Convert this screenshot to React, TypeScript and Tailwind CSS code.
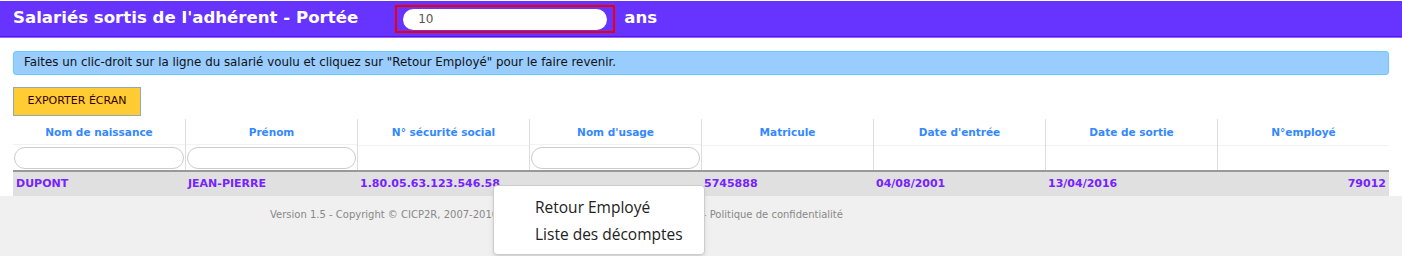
import React from "react";

const COLUMNS = [
  { label: "Nom de naissance", filter: true },
  { label: "Prénom", filter: true },
  { label: "N° sécurité social", filter: false },
  { label: "Nom d'usage", filter: true },
  { label: "Matricule", filter: false },
  { label: "Date d'entrée", filter: false },
  { label: "Date de sortie", filter: false },
  { label: "N°employé", filter: false },
];

const ROW = ["DUPONT", "JEAN-PIERRE", "1.80.05.63.123.546.58", "", "5745888", "04/08/2001", "13/04/2016", "79012"];

const App = () => {
  return (
    <div className="relative w-[1402px] h-[256px] bg-[#f0f0f0] overflow-hidden font-['DejaVu_Sans',sans-serif]">
      <div className="bg-white pt-px">
        <header className="h-[36px] bg-[#6633ff] border-b border-[#5511ee] flex items-center pl-[13px]">
          <h1 className="text-white font-bold text-[16.6px]">
            Salariés sortis de l&apos;adhérent - Portée
          </h1>
          <div className="ml-[37px] mt-px border-2 border-[#ee0000] w-[220px] h-[28px] flex items-center px-[6px]">
            <input
              defaultValue="10"
              className="w-full h-[21px] rounded-full bg-white pl-[15px] text-[12px] text-[#555] outline-none"
            />
          </div>
          <span className="ml-[9px] text-white font-bold text-[16.6px]">ans</span>
        </header>
        <div className="h-px bg-[#9966ff]" />

        <section className="px-[13px] pt-[13px]">
          <div className="w-[1376px] h-[24px] bg-[#99ccff] border border-[#66ccff] rounded-[3px] flex items-center pl-[10px] text-[11.85px] text-[#111]">
            Faites un clic-droit sur la ligne du salarié voulu et cliquez sur &quot;Retour Employé&quot; pour le faire revenir.
          </div>

          <button className="mt-[12px] w-[128px] h-[29px] bg-[#ffcc33] border border-[#8fa9b8] text-[11px] text-[#330000]">
            EXPORTER ÉCRAN
          </button>

          <div className="mt-[3px] w-[1376px]">
            <div className="grid grid-cols-8 border-b-2 border-[#999]">
              {COLUMNS.map((col, i) => (
                <div
                  key={col.label}
                  className={`h-[51px] flex flex-col ${i > 0 ? "border-l border-[#dddddd]" : ""}`}
                >
                  <div className="h-[27px] pt-[2px] flex items-center justify-center text-[10.5px] font-bold text-[#3388ff] border-b border-[#f2f2f2]">
                    {col.label}
                  </div>
                  <div className="flex-1 px-[1px] pt-px">
                    {col.filter && (
                      <input className="w-full h-[22px] rounded-full border border-[#cccccc] bg-white outline-none" />
                    )}
                  </div>
                </div>
              ))}
            </div>
            <div className="grid grid-cols-8 h-[24px] bg-[#e0e0e0] items-center text-[11px] font-bold text-[#7722ff]">
              {ROW.map((v, i) => (
                <div key={i} className={`px-[3px] ${i === 7 ? "text-right" : ""}`}>
                  {v}
                </div>
              ))}
            </div>
          </div>
        </section>
      </div>

      <footer className="pt-[11px] pl-[270px] text-[10px] text-[#888] whitespace-nowrap">
        Version 1.5 - Copyright © CICP2R, 2007-2016 - Mentions légales - Plan du site - Accès - Politique de confidentialité
      </footer>

      <div className="absolute left-[493px] top-[185px] w-[212px] h-[70px] bg-white border border-[#cccccc] rounded-[4px] shadow-md pt-[8px] text-[15.5px] text-[#222] font-['Open_Sans',sans-serif]">
        <div className="pl-[41px] leading-[27px]">Retour Employé</div>
        <div className="pl-[41px] leading-[27px]">Liste des décomptes</div>
      </div>
    </div>
  );
};

export default App;
